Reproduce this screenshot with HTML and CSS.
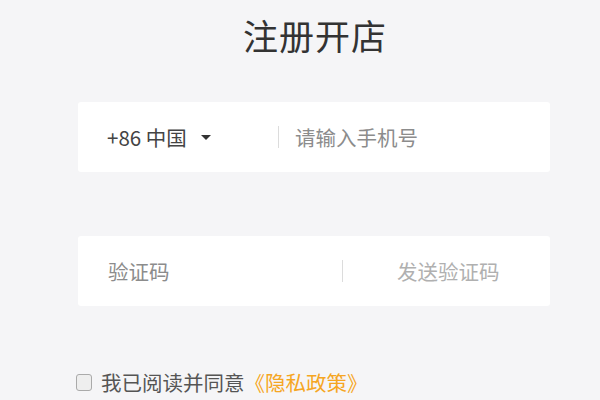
FILE: index.html
```html
<!DOCTYPE html>
<html lang="zh">
<head>
<meta charset="utf-8">
<link rel="stylesheet" href="styles.css">
</head>
<body>
<div class="page">
  <h1 class="title">注册开店</h1>
  <div class="form">
    <div class="field">
      <div class="country">+86 中国<span class="caret"></span></div>
      <span class="divider"></span>
      <span class="placeholder">请输入手机号</span>
    </div>
    <div class="field code">
      <span class="placeholder code-ph">验证码</span>
      <span class="divider"></span>
      <span class="send">发送验证码</span>
    </div>
    <label class="agree">
      <span class="box"></span>
      <span class="agree-text">我已阅读并同意</span>
      <span class="policy">《隐私政策》</span>
    </label>
  </div>
</div>
</body>
</html>
```

FILE: styles.css
```css
* { box-sizing: border-box; }
html, body {
  margin: 0;
  padding: 0;
  background: #f5f5f7;
  font-family: "Noto Sans CJK SC", "Noto Sans", sans-serif;
  width: 600px;
  height: 400px;
  overflow: hidden;
}
.page {
  padding-top: 14px;
}
.title {
  margin: 0;
  font-size: 35px;
  line-height: 42px;
  font-weight: 400;
  color: #333;
  text-align: center;
  padding-left: 30px;
  letter-spacing: 1px;
}
.form {
  margin-left: 78px;
  width: 472px;
  padding-top: 46px;
}
.field {
  height: 70px;
  background: #fff;
  border-radius: 3px;
  display: flex;
  align-items: center;
  font-size: 20.5px;
}
.country {
  width: 200px;
  padding-left: 29px;
  color: #444;
  display: flex;
  align-items: center;
}
.caret {
  display: inline-block;
  width: 0;
  height: 0;
  border-left: 5px solid transparent;
  border-right: 5px solid transparent;
  border-top: 5px solid #333;
  margin-left: 14px;
  margin-top: 1px;
}
.divider {
  width: 1px;
  height: 22px;
  background: #dcdcdc;
}
.placeholder {
  color: #8c8c8c;
  margin-left: 16px;
}
.code {
  margin-top: 64px;
}
.code-ph {
  width: 264px;
  margin-left: 0;
  padding-left: 30px;
}
.send {
  color: #b0b0b0;
  margin-left: 54px;
}
.agree {
  display: flex;
  align-items: center;
  margin-top: 64px;
  margin-left: -2px;
  font-size: 20.5px;
  line-height: 24px;
}
.box {
  width: 16px;
  height: 17px;
  border: 1.5px solid #aaa;
  border-radius: 3px;
  background: #eee;
}
.agree-text {
  color: #555;
  margin-left: 9px;
}
.policy {
  color: #f5a623;
  margin-left: 0;
}
```
